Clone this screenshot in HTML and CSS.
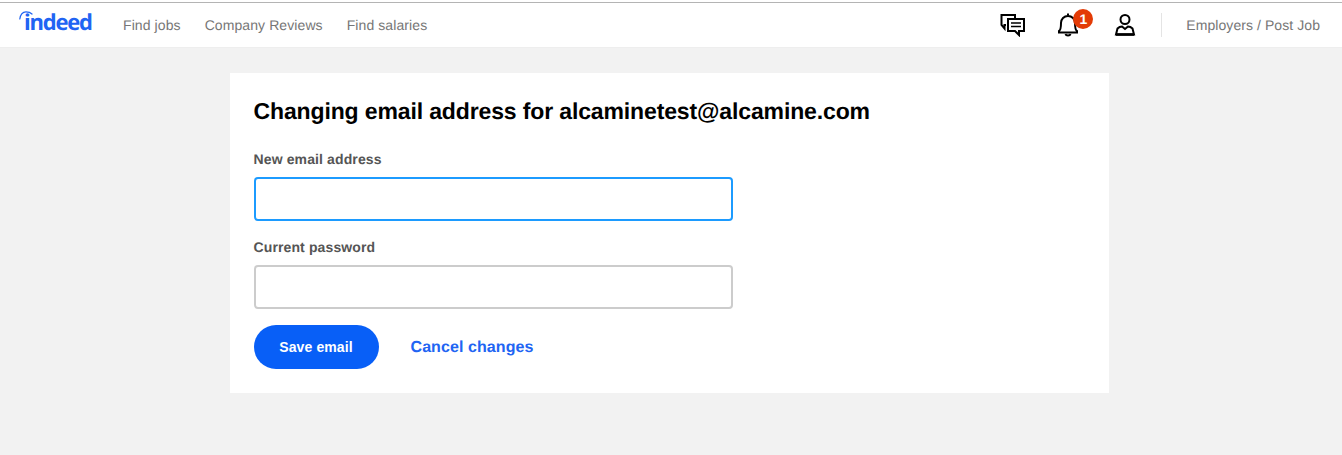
FILE: index.html
```html
<!DOCTYPE html>
<html lang="en">
<head>
<meta charset="utf-8">
<title>Change email</title>
<link rel="stylesheet" href="styles.css">
</head>
<body>
<header class="nav">
  <a class="logo" href="#">
    <svg class="logo-arc" width="14" height="10" viewBox="0 0 14 10"><path d="M0.800 8C1.500 3 4 0.800 7 0.800C9 0.800 11.500 1.500 13 3" fill="none" stroke="#2164f3" stroke-width="1.200" stroke-linecap="round"/></svg>
    <span class="logo-text">indeed</span>
  </a>
  <nav class="links">
    <a href="#">Find jobs</a>
    <a href="#">Company Reviews</a>
    <a href="#">Find salaries</a>
  </nav>
  <div class="right">
    <svg class="icon-chat" width="25" height="24" viewBox="0 0 25 24" fill="none" stroke="#000" stroke-width="2">
      <path d="M6 12H4.500V15.500L1.500 12V2H15V5"/>
      <path d="M8 6H24V18H19V22L15 18H8Z" fill="#fff"/>
      <path d="M11 10H21M11 13.500H21" stroke-width="1.300"/>
    </svg>
    <div class="bell-wrap">
      <svg class="icon-bell" width="20" height="24" viewBox="0 0 20 24" fill="none" stroke="#000" stroke-width="2">
        <path d="M1 19.500H19V18C17 17 17 14 17 10C17 6 14 3 10 3C6 3 3 6 3 10C3 14 3 17 1 18Z"/>
        <path d="M7.500 21C8 23 12 23 12.500 21"/>
        <path d="M9 1.500H11"/>
      </svg>
      <span class="badge">1</span>
    </div>
    <svg class="icon-user" width="22" height="24" viewBox="0 0 22 24" fill="none" stroke="#000" stroke-width="2">
      <circle cx="11" cy="6.500" r="4.500"/>
      <path d="M2 21.500L3.500 15.500C5 14 7 13.500 8 13.500L11 16L14 13.500C15 13.500 17 14 18.500 15.500L20 21.500Z"/>
      <path d="M2 21.500H20" stroke-width="2.600"/>
    </svg>
    <span class="divider"></span>
    <a class="employers" href="#">Employers / Post Job</a>
  </div>
</header>
<main class="page">
  <form class="card">
    <h1>Changing email address for alcaminetest@alcamine.com</h1>
    <label class="label" for="email">New email address</label>
    <div class="input focused" id="email"></div>
    <label class="label second" for="password">Current password</label>
    <div class="input" id="password"></div>
    <div class="actions">
      <button class="save" type="button">Save email</button>
      <a class="cancel" href="#">Cancel changes</a>
    </div>
  </form>
</main>
</body>
</html>
```
FILE: styles.css
```css
* { box-sizing: border-box; }
html, body { margin: 0; height: 100%; }
body {
  background: #f2f2f2;
  font-family: "Liberation Sans", Arial, sans-serif;
  text-rendering: geometricPrecision;
  overflow: hidden;
  padding-top: 2px;
}
a { text-decoration: none; }

.nav {
  height: 46px;
  border-top: 1px solid #b4b4b4;
  border-bottom: 1px solid #eee;
  background: #fff;
  display: flex;
  align-items: center;
  padding: 0 22px 0 19px;
  box-shadow: 0 -2px 0 #fff;
}
.logo {
  position: relative;
  width: 104px;
  height: 30px;
  display: block;
  margin-top: -6px;
}
.logo-arc { position: absolute; left: 0; top: 4px; }
.logo-text {
  position: absolute;
  left: 5px;
  top: 0;
  font: 700 22px/30px "Open Sans", "Liberation Sans", sans-serif;
  letter-spacing: -1.200px;
  color: #2164f3;
}
.links { display: flex; gap: 24px; }
.links a { color: #767676; font-size: 14px; letter-spacing: 0.090px; white-space: nowrap; }
.employers { color: #767676; font-size: 14px; letter-spacing: 0.070px; white-space: nowrap; }
.right { margin-left: auto; display: flex; align-items: center; }
.icon-chat { margin-right: 33px; }
.bell-wrap { position: relative; width: 20px; height: 24px; margin-right: 36px; }
.icon-bell { display: block; }
.badge {
  position: absolute;
  left: 15px;
  top: -4px;
  width: 20px;
  height: 20px;
  border-radius: 50%;
  background: #e33b06;
  color: #fff;
  font-size: 14px;
  font-weight: 700;
  line-height: 20px;
  text-align: center;
}
.divider { width: 1px; height: 24px; background: #e4e4e4; margin: 0 24px 0 25px; }

.page { padding-top: 25px; display: flex; justify-content: center; padding-right: 4px; }
.card {
  width: 879px;
  height: 320px;
  background: #fff;
  padding: 24px;
}
h1 {
  margin: 0 0 25px;
  font-size: 23px;
  line-height: 28px;
  font-weight: 700;
  letter-spacing: -0.130px;
  color: #000;
  white-space: nowrap;
}
.label {
  display: block;
  font-size: 14px;
  line-height: 18px;
  font-weight: 700;
  letter-spacing: 0.120px;
  color: #555;
  margin-bottom: 9px;
}
.label.second { margin-top: 17px; }
.input {
  width: 479.500px;
  height: 44px;
  background: #fff;
  border: 2px solid #ccc;
  border-radius: 4px;
}
.input.focused { border-color: #1c9bff; }
.actions { display: flex; align-items: center; margin-top: 16px; }
.save {
  width: 125px;
  height: 44px;
  border: 0;
  border-radius: 22px;
  background: #085ff7;
  color: #fff;
  font: 700 14px "Liberation Sans", Arial, sans-serif;
  letter-spacing: 0.100px;
}
.cancel {
  margin-left: 32px;
  color: #2164f3;
  font-size: 16px;
  font-weight: 700;
  letter-spacing: 0.080px;
  position: relative;
  top: 1px;
}
```
